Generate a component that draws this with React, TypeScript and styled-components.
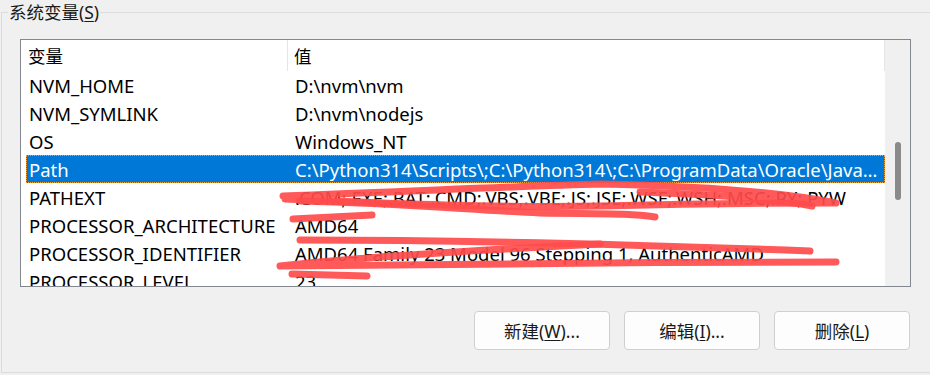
import React from "react"
import styled, { createGlobalStyle } from "styled-components"

const GlobalStyle = createGlobalStyle`
  html, body {
    margin: 0;
    padding: 0;
    background: #f0f0f0;
  }
  body {
    font-family: "Noto Sans", "Noto Sans CJK SC", sans-serif;
    color: #000;
  }
`

const FONT = `"Noto Sans", "Noto Sans CJK SC", sans-serif`

interface EnvVar {
  name: string
  value: string
}

const variables: EnvVar[] = [
  { name: "NVM_HOME", value: "D:\\nvm\\nvm" },
  { name: "NVM_SYMLINK", value: "D:\\nvm\\nodejs" },
  { name: "OS", value: "Windows_NT" },
  {
    name: "Path",
    value:
      "C:\\Python314\\Scripts\\;C:\\Python314\\;C:\\ProgramData\\Oracle\\Java\\javapath;C:\\Windows\\system32",
  },
  {
    name: "PATHEXT",
    value: ".COM;.EXE;.BAT;.CMD;.VBS;.VBE;.JS;.JSE;.WSF;.WSH;.MSC;.PY;.PYW",
  },
  { name: "PROCESSOR_ARCHITECTURE", value: "AMD64" },
  {
    name: "PROCESSOR_IDENTIFIER",
    value: "AMD64 Family 23 Model 96 Stepping 1, AuthenticAMD",
  },
  { name: "PROCESSOR_LEVEL", value: "23" },
]

const SELECTED = "Path"

export default function App() {
  return (
    <>
      <GlobalStyle />
      <Page>
        <GroupBox>
          <Legend>
            系统变量(<Key>S</Key>)
          </Legend>
          <ListView>
            <Table>
              <HeaderRow>
                <HeaderCell>变量</HeaderCell>
                <HeaderCell>值</HeaderCell>
              </HeaderRow>
              {variables.map((v) => (
                <Row key={v.name} selected={v.name === SELECTED}>
                  <NameCell>{v.name}</NameCell>
                  <ValueCell>{v.value}</ValueCell>
                </Row>
              ))}
            </Table>
            <ScrollTrack>
              <Thumb />
            </ScrollTrack>
          </ListView>
          <ButtonRow>
            <Button>
              新建(<Key>W</Key>)...
            </Button>
            <Button>
              编辑(<Key>I</Key>)...
            </Button>
            <Button>
              删除(<Key>L</Key>)
            </Button>
          </ButtonRow>
        </GroupBox>
        <Scribble viewBox="0 0 930 375" width="930" height="375">
          <g
            fill="none"
            stroke="#ff4b4b"
            strokeOpacity="0.92"
            strokeWidth="7"
            strokeLinecap="round"
            strokeLinejoin="round"
          >
            <path d="M283 196 C400 192 520 186 600 184 C700 186 780 192 836 203 C760 203 680 204 600 206 C480 208 360 202 285 199" />
            <path d="M300 201 C400 203 470 210 540 213 C600 214 630 213 655 217" />
            <path d="M640 192 C700 194 770 198 812 206" />
            <path d="M293 219 L372 215" />
            <path d="M300 240 C450 240 600 243 810 251" />
            <path d="M600 244 C480 250 350 258 280 266 C450 264 650 262 836 262" />
            <path d="M292 274 L367 276" />
          </g>
        </Scribble>
      </Page>
    </>
  )
}

// Styled Components
const Page = styled.div`
  position: relative;
  width: 930px;
  height: 375px;
  overflow: hidden;
  padding-left: 1px;
  box-sizing: border-box;
`

const GroupBox = styled.fieldset`
  box-sizing: border-box;
  width: 932px;
  height: 373px;
  margin: 0;
  padding: 0 0 0 18px;
  border: 1px solid #dcdcdc;
  display: flex;
  flex-direction: column;
`

const Legend = styled.legend`
  margin-left: -12px;
  padding: 0 1px;
  font-family: ${FONT};
  font-size: 17.5px;
  line-height: 24px;
  color: #1a1a1a;
`

const Key = styled.span`
  text-decoration: underline;
  text-underline-offset: 2px;
  text-decoration-thickness: 1px;
`

const ListView = styled.div`
  margin-top: 15px;
  width: 891px;
  height: 248px;
  box-sizing: border-box;
  border: 1px solid #828790;
  background: #fff;
  display: flex;
  overflow: hidden;
`

const Table = styled.div`
  flex: 1;
  padding-left: 5px;
  display: flex;
  flex-direction: column;
  overflow: hidden;
`

const HeaderRow = styled.div`
  display: grid;
  grid-template-columns: 261px 1fr;
  height: 31px;
  flex-shrink: 0;
  border-right: 1px solid #e5e5e5;
  margin-left: -5px;
  padding-left: 5px;
`

const HeaderCell = styled.div`
  display: flex;
  align-items: center;
  padding-left: 2px;
  font-family: ${FONT};
  font-size: 17.5px;
  color: #000;

  & + & {
    border-left: 1px solid #e5e5e5;
    padding-left: 6px;
  }
`

const Row = styled.div<{ selected?: boolean }>`
  display: grid;
  grid-template-columns: 261px 1fr;
  height: 28px;
  flex-shrink: 0;
  box-sizing: border-box;
  align-items: center;
  font-family: ${FONT};
  font-size: 18.5px;
  background: ${({ selected }) => (selected ? "#0078d7" : "transparent")};
  color: ${({ selected }) => (selected ? "#fff" : "#000")};
  border: 1px ${({ selected }) => (selected ? "dotted #f5a13a" : "solid transparent")};
`

const NameCell = styled.div`
  padding-left: 2px;
  white-space: nowrap;
  overflow: hidden;
`

const ValueCell = styled.div`
  padding-left: 7px;
  padding-right: 3px;
  white-space: nowrap;
  overflow: hidden;
  text-overflow: ellipsis;
`

const ScrollTrack = styled.div`
  width: 25px;
  flex-shrink: 0;
  background: #f0f0f0;
  display: flex;
  justify-content: center;
  padding-top: 102px;
  box-sizing: border-box;
`

const Thumb = styled.div`
  width: 6px;
  height: 58px;
  border-radius: 3px;
  background: #8a8a8a;
`

const ButtonRow = styled.div`
  display: flex;
  justify-content: flex-end;
  gap: 14px;
  width: 890px;
  margin-top: 24px;
`

const Button = styled.button`
  width: 136px;
  height: 39px;
  box-sizing: border-box;
  border: 1px solid #d0d0d0;
  border-radius: 4px;
  background: #fdfdfd;
  font-family: ${FONT};
  font-size: 17.5px;
  color: #1a1a1a;
  padding: 0;
`

const Scribble = styled.svg`
  position: absolute;
  left: 0;
  top: 0;
  pointer-events: none;
`
